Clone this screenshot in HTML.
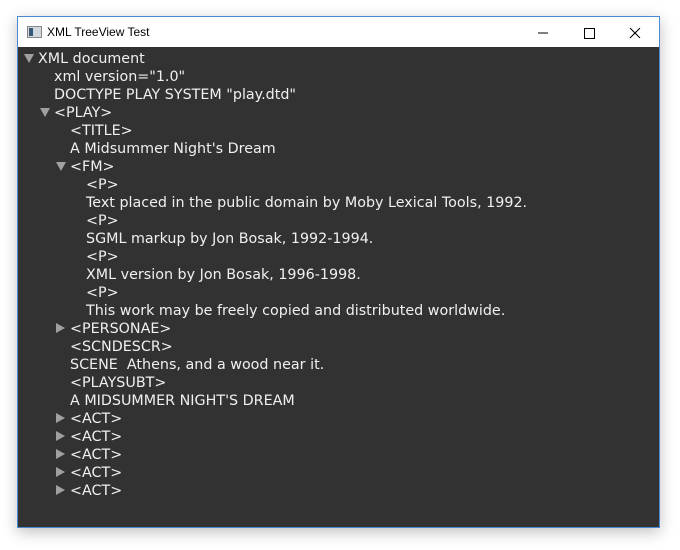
<!DOCTYPE html>
<html><head><style>
body{margin:0;width:680px;height:550px;background:#fff;position:relative;overflow:hidden;font-family:"DejaVu Sans","Liberation Sans",sans-serif}
.win{position:absolute;left:17px;top:16px;width:641px;height:510px;border:1px solid #4a8ad0;box-shadow:0 4px 14px rgba(0,0,0,.25);background:#fff}
.title{position:absolute;left:0;top:0;right:0;height:30px;background:#fff;font-family:"Liberation Sans",sans-serif;font-size:12px;color:#000}
.title .t{position:absolute;left:29px;top:8px}
.icon{position:absolute;left:9px;top:9px;width:13px;height:10px;border:1px solid #888;background:#cfd8dc}
.icon:before{content:"";position:absolute;left:1px;top:1px;width:4px;height:8px;background:#3a5a7a}
.content{position:absolute;left:0;top:30px;right:0;bottom:0;background:#323232}
.r{position:absolute;color:#f0f0f0;font-size:14.3px;white-space:pre;line-height:20px}
.a{position:absolute;width:0;height:0}
.d{border-left:5px solid transparent;border-right:5px solid transparent;border-top:9px solid #a0a0a0}
.rt{border-top:5px solid transparent;border-bottom:5px solid transparent;border-left:9px solid #a0a0a0}
</style></head><body>
<div class="win">
<div class="title"><div class="icon"></div><span class="t">XML TreeView Test</span>
<svg style="position:absolute;left:510px;top:8px" width="130" height="16">
<line x1="10" y1="8" x2="20" y2="8" stroke="#000"/>
<rect x="56.5" y="3.5" width="10" height="10" fill="none" stroke="#000"/>
<line x1="102" y1="3" x2="112" y2="13" stroke="#000"/><line x1="112" y1="3" x2="102" y2="13" stroke="#000"/>
</svg></div>
<div class="content"></div>
</div>
<div class="a d" style="left:24px;top:54px"></div>
<div class="r" style="left:38px;top:49px">XML document</div>
<div class="r" style="left:54px;top:67px">xml version="1.0"</div>
<div class="r" style="left:54px;top:85px">DOCTYPE PLAY SYSTEM "play.dtd"</div>
<div class="a d" style="left:40px;top:108px"></div>
<div class="r" style="left:54px;top:103px">&lt;PLAY&gt;</div>
<div class="r" style="left:70px;top:121px">&lt;TITLE&gt;</div>
<div class="r" style="left:70px;top:139px">A Midsummer Night's Dream</div>
<div class="a d" style="left:56px;top:162px"></div>
<div class="r" style="left:70px;top:157px">&lt;FM&gt;</div>
<div class="r" style="left:86px;top:175px">&lt;P&gt;</div>
<div class="r" style="left:86px;top:193px">Text placed in the public domain by Moby Lexical Tools, 1992.</div>
<div class="r" style="left:86px;top:211px">&lt;P&gt;</div>
<div class="r" style="left:86px;top:229px">SGML markup by Jon Bosak, 1992-1994.</div>
<div class="r" style="left:86px;top:247px">&lt;P&gt;</div>
<div class="r" style="left:86px;top:265px">XML version by Jon Bosak, 1996-1998.</div>
<div class="r" style="left:86px;top:283px">&lt;P&gt;</div>
<div class="r" style="left:86px;top:301px">This work may be freely copied and distributed worldwide.</div>
<div class="a rt" style="left:56px;top:323px"></div>
<div class="r" style="left:70px;top:319px">&lt;PERSONAE&gt;</div>
<div class="r" style="left:70px;top:337px">&lt;SCNDESCR&gt;</div>
<div class="r" style="left:70px;top:355px">SCENE  Athens, and a wood near it.</div>
<div class="r" style="left:70px;top:373px">&lt;PLAYSUBT&gt;</div>
<div class="r" style="left:70px;top:391px">A MIDSUMMER NIGHT'S DREAM</div>
<div class="a rt" style="left:56px;top:413px"></div>
<div class="r" style="left:70px;top:409px">&lt;ACT&gt;</div>
<div class="a rt" style="left:56px;top:431px"></div>
<div class="r" style="left:70px;top:427px">&lt;ACT&gt;</div>
<div class="a rt" style="left:56px;top:449px"></div>
<div class="r" style="left:70px;top:445px">&lt;ACT&gt;</div>
<div class="a rt" style="left:56px;top:467px"></div>
<div class="r" style="left:70px;top:463px">&lt;ACT&gt;</div>
<div class="a rt" style="left:56px;top:485px"></div>
<div class="r" style="left:70px;top:481px">&lt;ACT&gt;</div>
</body></html>
